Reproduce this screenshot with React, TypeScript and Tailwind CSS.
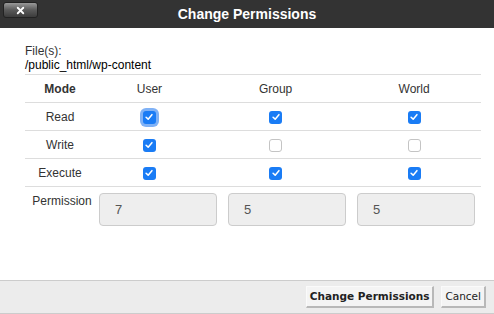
import { X } from 'lucide-react'

function Box({ checked, focus }: { checked: boolean; focus?: boolean }) {
  if (!checked) {
    return <span className="inline-block w-[13px] h-[13px] rounded-[3px] border border-[#c4c4c4] bg-white align-middle" />
  }
  return (
    <span
      className={`inline-flex items-center justify-center w-[13px] h-[13px] rounded-[3px] bg-[#1a7cf5] align-middle ${
        focus ? 'ring-[3px] ring-[#80b2f6]' : ''
      }`}
    >
      <svg viewBox="0 0 12 12" className="w-[10px] h-[10px]">
        <path d="M2.5 6.3 L5 8.6 L9.5 3.2" fill="none" stroke="white" strokeWidth="1.8" strokeLinecap="round" strokeLinejoin="round" />
      </svg>
    </span>
  )
}

const rows = [
  { mode: 'Read', v: [true, true, true] },
  { mode: 'Write', v: [true, false, false] },
  { mode: 'Execute', v: [true, true, true] },
]

export default function App() {
  return (
    <div className="w-[494px] h-[314px] bg-white flex flex-col font-['Liberation_Sans',Arial,sans-serif] text-[#333] overflow-hidden">
      {/* Title bar */}
      <div className="relative h-[28px] bg-[#333333] flex items-center justify-center shrink-0">
        <button className="absolute left-[3px] top-[2px] w-[35px] h-[16px] rounded-[3px] border border-[#222] bg-gradient-to-b from-[#9a9a9a] via-[#5a5a5a] to-[#3c3c3c] flex items-center justify-center">
          <X className="w-[11px] h-[11px] text-white" strokeWidth={4} />
        </button>
        <span className="text-white font-bold text-[14px]">Change Permissions</span>
      </div>

      {/* Body */}
      <div className="flex-1 px-[25px] pt-[16px] text-[12px] leading-[14px]">
        <div>File(s):</div>
        <div className="text-black">/public_html/wp-content</div>

        <table className="w-[456px] mt-[2px] border-collapse">
          <tbody>
            <tr className="h-[28px] border-t border-[#dddddd]">
              <th className="w-[70px] font-bold text-center">Mode</th>
              <td className="text-center">User</td>
              <td className="text-center">Group</td>
              <td className="text-center">World</td>
            </tr>
            {rows.map((r, i) => (
              <tr key={r.mode} className="h-[28px] border-t border-[#dddddd]">
                <td className="text-center">{r.mode}</td>
                {r.v.map((c, j) => (
                  <td key={j} className="text-center">
                    <Box checked={c} focus={i === 0 && j === 0} />
                  </td>
                ))}
              </tr>
            ))}
            <tr className="border-t border-[#dddddd]">
              <td className="align-top pt-[7px] text-center pl-[4px]">Permission</td>
              <td colSpan={3} className="pt-[6px]">
                <div className="flex gap-[11px] pl-[4px]">
                  {['7', '5', '5'].map((n, k) => (
                    <div key={k} className="w-[118px] h-[33px] rounded-[4px] border border-[#cccccc] bg-[#eeeeee] flex items-center pl-[15px] text-[13px] text-[#555]">
                      {n}
                    </div>
                  ))}
                </div>
              </td>
            </tr>
          </tbody>
        </table>
      </div>

      {/* Footer */}
      <div className="h-[34px] shrink-0 bg-[#ececec] border-t border-b border-[#cccccc] flex items-center justify-end gap-[7px] pr-[8px] font-['DejaVu_Sans',Verdana,sans-serif] text-[10.5px] text-[#222]">
        <button className="h-[22px] px-[3px] bg-[#f4f4f4] border-t border-l border-[#fafafa] border-r-2 border-b-2 border-r-[#b8b8b8] border-b-[#b8b8b8] font-bold">
          Change Permissions
        </button>
        <button className="h-[22px] px-[3px] bg-[#f4f4f4] border-t border-l border-[#fafafa] border-r-2 border-b-2 border-r-[#b8b8b8] border-b-[#b8b8b8]">
          Cancel
        </button>
      </div>
    </div>
  )
}
